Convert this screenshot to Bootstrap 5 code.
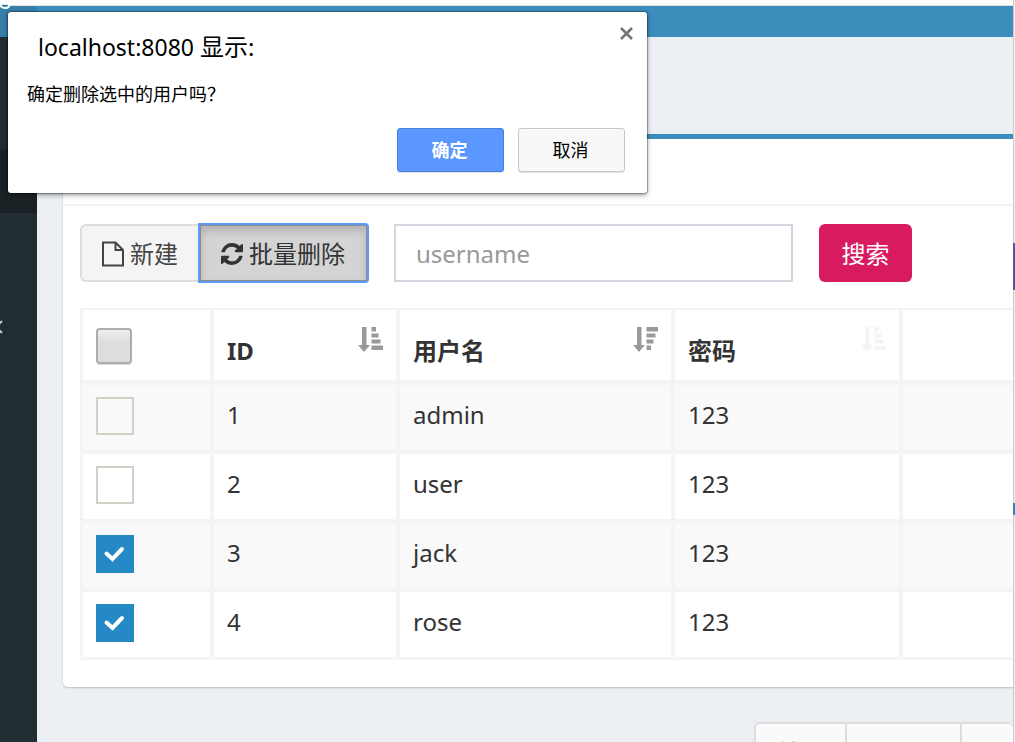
<!DOCTYPE html>
<html lang="zh-CN">
<head>
<meta charset="utf-8">
<meta name="viewport" content="width=device-width, initial-scale=1">
<title>用户管理</title>
<link href="https://cdn.jsdelivr.net/npm/bootstrap@5.3.0/dist/css/bootstrap.min.css" rel="stylesheet">
<style>
body{font-family:"Noto Sans","Noto Sans CJK SC",sans-serif;font-size:24px;line-height:32px;color:#333;background:#ecf0f5}
.top-edge{height:6px;background:#fff;border-bottom:1px solid #e3e3e3}
.side-rail{width:37px;background:#222d32}
.rail-logo{height:31px;background:#367fa9}
.rail-header{height:112px}
.rail-active{height:64px;background:#1a2226}
.rail-item{height:228px;color:#b8c7ce;padding-top:107px}
.rail-item svg,.brand-mark{display:block}
.brand-mark{position:absolute;left:0;top:0}
.top-nav{height:31px;background:#3c8dbc}
.content-area{padding:97px 0 0 26px}
.user-box{background:#fff;border-top:5px solid #3c8dbc;border-radius:5px 0 0 5px;box-shadow:0 1px 2px rgba(0,0,0,.22)}
.box-head{height:67px;border-bottom:2px solid #f4f4f4}
.box-content{padding:18px 0 27px 17px}
.tool-btn{height:58px;padding:2px 20px 0;font-size:24px;line-height:32px;border:2px solid #ddd;border-radius:6px;background:#f4f4f4;color:#444;white-space:nowrap}
.tool-btn.is-down{background:#d4d4d4;border-color:#8c8c8c;color:#333;box-shadow:inset 0 5px 8px rgba(0,0,0,.16);outline:2px solid #5b9bf8;outline-offset:-1px;position:relative}
.btn-left{border-radius:6px 0 0 6px;border-right:0;width:119px;gap:6px}
.btn-right{border-radius:0 3px 3px 0;width:169px;gap:6px}
.name-input{width:399px;height:58px;border:2px solid #d2d6de;border-radius:0;padding:0 20px;font-size:24px;color:#444;margin-left:26px}
.name-input::placeholder{color:#999;opacity:1}
.search-btn{width:93px;height:58px;padding:2px 0 0;margin-left:26px;border:0;border-radius:6px;background:#d81b60;color:#fff;font-size:24px}
.user-table{table-layout:fixed;width:100%;margin-top:26px;border-collapse:separate;border-spacing:0;border-left:3px solid #f4f4f4;border-top:2px solid #f4f4f4}
.user-table th,.user-table td{padding:0 13px;border-right:4px solid #f4f4f4;border-bottom:4px solid #f4f4f4;vertical-align:top}
.user-table th:last-child,.user-table td:last-child{border-right:0}
.user-table th{height:75px;border-bottom-width:5px;font-weight:700}
.user-table td{height:69px;padding-top:12px;line-height:36px}
.user-table tbody tr:nth-child(odd) td{background:#f9f9f9}
.user-table tbody tr:last-child td{height:68px;border-bottom-width:3px}
.c-check{width:131px}.c-id{width:186px}.c-name{width:275px}.c-pass{width:228px}
.head-label{padding-top:25px}
.sort-icon{margin-top:16px;color:#999}
.sort-icon.idle{color:#f4f4f4}
.row-check{appearance:none;display:block;width:38px;height:38px;margin:0;border:2px solid #d4d0c8;background:transparent}
.row-check:checked{border:0;background:#2489c5 url("data:image/svg+xml,%3Csvg xmlns='http://www.w3.org/2000/svg' viewBox='0 0 38 38'%3E%3Cpath d='M10.500 18.500L16.500 24L26 14' fill='none' stroke='white' stroke-width='4' stroke-linecap='round'/%3E%3C/svg%3E") center/38px no-repeat}
.all-check{appearance:none;display:block;width:36px;height:36px;margin:18px 0 0;border:2px solid #adadad;border-radius:4px;background:linear-gradient(#eee,#ddd 40%);box-shadow:0 1px 1px rgba(0,0,0,.15)}
.pager{margin:35px 0 0 691px}
.pager .page-link{height:58px;padding:13px 21px 9px 20px;border:2px solid #ddd;border-right:0;background:#fafafa;color:#666;font-size:24px;line-height:32px;white-space:nowrap}
.pager .page-item:first-child .page-link{border-radius:6px 0 0 6px}
.pager .page-item+.page-item .page-link{margin:0}
.window-edge{width:2px;background:linear-gradient(90deg,#c9cbd0 50%,#f0f0f0 50%)}
.edge-gap{height:243px}.edge-tab{height:47px;background:#5850a0}
.edge-link{height:12px;margin-top:213px;background:#2489c5}
.confirm-box{position:absolute;left:8px;top:12px;width:639px;background:#fff;border-radius:3px;box-shadow:0 0 1px 1px rgba(0,0,0,.3),0 2px 5px rgba(0,0,0,.4);color:#000;padding:12px 22px 21px 19px}
.confirm-title{font-size:23px;line-height:32px;font-weight:400;margin:7px 0 0 11px}
.confirm-title span{font-size:24px}
.confirm-text{font-size:18px;line-height:26px;margin:18px 0 21px}
.close-btn{border:0;background:none;padding:3px 0;width:13px;height:19px;margin-right:-8px;color:#757575}
.dialog-actions{gap:14px}
.dialog-btn{width:107px;height:44px;padding:0 2px 0 0;font-size:18px;line-height:24px;border-radius:3px;border:1px solid #c6c6c6;background:#f8f8f8;color:#000;box-shadow:0 1px 0 rgba(0,0,0,.1)}
.dialog-btn.ok{background:#5a97ff;border-color:#4a80dc;color:#fff;font-weight:700}
</style>
</head>
<body>
<div class="d-flex vh-100 overflow-hidden position-relative">
  <div class="d-flex flex-column flex-grow-1 overflow-hidden">
    <div class="top-edge flex-shrink-0"></div>
    <div class="d-flex flex-grow-1">
      <nav class="side-rail flex-shrink-0">
        <div class="rail-logo"></div>
        <div class="rail-header"></div>
        <div class="rail-active"></div>
        <div class="rail-item"><svg width="4" height="14" viewBox="0 0 4 14" fill="none" stroke="currentColor" stroke-width="2"><path d="M2 1L-4 7L2 13"/></svg></div>
      </nav>
      <main class="flex-grow-1 overflow-hidden">
        <header class="top-nav"></header>
        <div class="content-area">
          <section class="user-box">
            <div class="box-head"></div>
            <div class="box-content">
              <form class="d-flex" onsubmit="return false">
                <button type="button" class="tool-btn btn-left d-flex align-items-center"><svg width="22" height="26" viewBox="0 0 22 26" fill="none" stroke="currentColor" stroke-width="2" class="flex-shrink-0"><path d="M1 1.500H13.500L21 9V24.500H1ZM13.500 2V9H21"/></svg><span>新建</span></button>
                <button type="button" class="tool-btn btn-right is-down d-flex align-items-center"><svg width="22" height="22" viewBox="0 0 1536 1536" fill="currentColor" class="flex-shrink-0"><path d="M1511 928q0 5-1 7-64 268-268 434.500T764 1536q-146 0-282.500-55T238 1324l-129 129q-19 19-45 19t-45-19-19-45V960q0-26 19-45t45-19h448q26 0 45 19t19 45-19 45l-137 137q71 66 161 102t187 36q134 0 250-65t186-179q11-17 53-117 8-23 30-23h192q13 0 22.500 9.500t9.500 22.500zm25-800v448q0 26-19 45t-45 19h-448q-26 0-45-19t-19-45 19-45l138-138Q969 256 768 256q-134 0-250 65T332 500q-11 17-53 117-8 23-30 23H50q-13 0-22.500-9.500T18 608v-7q65-268 270-434.500T768 0q146 0 284 55.500T1297 212l130-129q19-19 45-19t45 19 19 45z"/></svg><span>批量删除</span></button>
                <input type="text" class="name-input" placeholder="username" aria-label="username">
                <button type="submit" class="search-btn">搜索</button>
              </form>
              <table class="user-table">
                <colgroup><col class="c-check"><col class="c-id"><col class="c-name"><col class="c-pass"><col></colgroup>
                <thead><tr>
                  <th><input type="checkbox" class="all-check" aria-label="全选"></th>
                  <th><div class="d-flex justify-content-between"><span class="head-label">ID</span><svg class="sort-icon" width="25" height="28" viewBox="0 0 25 28" fill="currentColor"><path d="M4 1H8.500V19H12L6 26L0 19H4ZM13.500 1H18V5.500H13.500ZM13.500 7.500H20.500V11.500H13.500ZM13.500 13.500H22.500V17.500H13.500ZM13.500 19.500H25V24H13.500Z"/></svg></div></th>
                  <th><div class="d-flex justify-content-between"><span class="head-label">用户名</span><svg class="sort-icon" width="25" height="28" viewBox="0 0 25 28" fill="currentColor"><path d="M4 1H8.500V19H12L6 26L0 19H4ZM13.500 1H25V5.500H13.500ZM13.500 7.500H22.500V11.500H13.500ZM13.500 13.500H20.500V17.500H13.500ZM13.500 19.500H18V24H13.500Z"/></svg></div></th>
                  <th><div class="d-flex justify-content-between"><span class="head-label">密码</span><svg class="sort-icon idle" width="25" height="28" viewBox="0 0 25 28" fill="currentColor"><path d="M4 1H8.500V19H12L6 26L0 19H4ZM13.500 1H18V5.500H13.500ZM13.500 7.500H20.500V11.500H13.500ZM13.500 13.500H22.500V17.500H13.500ZM13.500 19.500H25V24H13.500Z"/></svg></div></th>
                  <th></th>
                </tr></thead>
                <tbody>
                  <tr><td><input type="checkbox" class="row-check" aria-label="admin"></td><td>1</td><td>admin</td><td>123</td><td></td></tr>
                  <tr><td><input type="checkbox" class="row-check" aria-label="user"></td><td>2</td><td>user</td><td>123</td><td></td></tr>
                  <tr><td><input type="checkbox" class="row-check" aria-label="jack" checked></td><td>3</td><td>jack</td><td>123</td><td></td></tr>
                  <tr><td><input type="checkbox" class="row-check" aria-label="rose" checked></td><td>4</td><td>rose</td><td>123</td><td></td></tr>
                </tbody>
              </table>
            </div>
          </section>
          <ul class="pagination pager">
            <li class="page-item"><a class="page-link" href="#">首页</a></li>
            <li class="page-item"><a class="page-link" href="#">上一页</a></li>
            <li class="page-item flex-grow-1"><a class="page-link" href="#" aria-label="1"></a></li>
          </ul>
        </div>
      </main>
    </div>
  </div>
  <div class="window-edge flex-shrink-0"><div class="edge-gap"></div><div class="edge-tab"></div><div class="edge-link"></div></div>
  <svg class="brand-mark" width="12" height="9" viewBox="0 0 12 9" fill="none" stroke="#fff" stroke-width="2"><path fill="#367fa9" d="M1 3.500Q0 8 5 8T9 4Z"/></svg>
  <div class="confirm-box" role="dialog" aria-labelledby="dialogTitle">
    <div class="d-flex justify-content-between align-items-start">
      <h1 class="confirm-title" id="dialogTitle">localhost:8080 <span>显示:</span></h1>
      <button type="button" class="close-btn d-flex align-items-center" aria-label="关闭"><svg width="13" height="13" viewBox="0 0 13 13" stroke="currentColor" stroke-width="2.500"><path d="M1 1L12 12M12 1L1 12"/></svg></button>
    </div>
    <p class="confirm-text">确定删除选中的用户吗？</p>
    <div class="dialog-actions d-flex justify-content-end">
      <button type="button" class="dialog-btn ok">确定</button>
      <button type="button" class="dialog-btn">取消</button>
    </div>
  </div>
</div>
<script src="https://cdn.jsdelivr.net/npm/bootstrap@5.3.0/dist/js/bootstrap.bundle.min.js"></script>
</body>
</html>
